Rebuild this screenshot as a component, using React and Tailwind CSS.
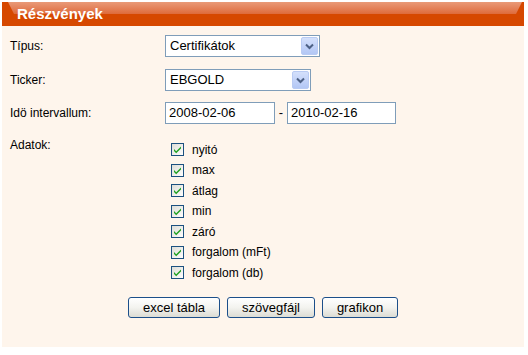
import React from 'react';

const rows = ['nyitó', 'max', 'átlag', 'min', 'záró', 'forgalom (mFt)', 'forgalom (db)'];

const Check = () => (
  <svg width="13" height="13" viewBox="0 0 13 13" className="shrink-0">
    <defs>
      <linearGradient id="cbg" x1="0" y1="0" x2="1" y2="1">
        <stop offset="0" stopColor="#dcdcd6" />
        <stop offset="1" stopColor="#ffffff" />
      </linearGradient>
    </defs>
    <rect x="0.5" y="0.5" width="12" height="12" fill="url(#cbg)" stroke="#1c5180" />
    <path d="M3 6 L5.2 8.3 L10 3.6 L10 5.6 L5.2 10.3 L3 8 Z" fill="#21a121" />
  </svg>
);

const Select = ({ value, width }) => (
  <div className={`flex items-center h-[22px] border border-[#7f9db9] bg-white ${width}`}>
    <span className="flex-1 pl-[4px] text-[13px] text-black">{value}</span>
    <span className="w-[17px] h-[18px] mr-[1px] flex items-center justify-center rounded-[2px] border border-[#b9cbf3] bg-gradient-to-b from-[#d4e0fb] to-[#b3c7f5]">
      <svg width="9" height="7" viewBox="0 0 9 7">
        <path d="M1 1.5 L4.5 5 L8 1.5" fill="none" stroke="#4d6185" strokeWidth="2" />
      </svg>
    </span>
  </div>
);

const Btn = ({ children, width }) => (
  <button className={`h-[21px] ${width} rounded-[3px] border border-[#1c4f8a] bg-gradient-to-b from-white via-[#f3f3ef] to-[#dcdcd4] text-[13px] font-normal text-black leading-none`}>
    {children}
  </button>
);

export default function App() {
  return (
    <div className="bg-white w-[528px] h-[355px] pt-[2px] pl-[2px] font-['Liberation_Sans',Arial,sans-serif]">
      <div className="w-[522px] h-[345px] bg-[#fef5ec] flex flex-col">
        <div className="relative h-[24px] bg-[#d64800] flex items-center">
          <div className="absolute left-[2px] right-[2px] top-0 h-[12px] bg-gradient-to-b from-[#e99a78] to-[#de6a3a] [clip-path:polygon(4px_0,100%_0,calc(100%-6px)_100%,10px_100%)]" />
          <span className="relative pl-[15px] text-[15px] font-bold text-white">Részvények</span>
        </div>

        <div className="flex flex-col pl-[8px] text-[12px] text-black">
          <div className="flex items-center mt-[9px]">
            <span className="w-[155px]">Típus:</span>
            <Select value="Certifikátok" width="w-[155px]" />
          </div>
          <div className="flex items-center mt-[12px]">
            <span className="w-[155px]">Ticker:</span>
            <Select value="EBGOLD" width="w-[146px]" />
          </div>
          <div className="flex items-center mt-[11px]">
            <span className="w-[155px]">Idö intervallum:</span>
            <div className="w-[110px] h-[22px] border border-[#7f9db9] bg-white pl-[3px] text-[13px] flex items-center">2008-02-06</div>
            <span className="w-[12px] text-center text-[13px]">-</span>
            <div className="w-[109px] h-[22px] border border-[#7f9db9] bg-white pl-[3px] text-[13px] flex items-center">2010-02-16</div>
          </div>
          <div className="flex mt-[12px]">
            <span className="w-[161px]">Adatok:</span>
            <div className="flex flex-col gap-[7.5px] pt-[7px]">
              {rows.map((r) => (
                <div key={r} className="flex items-center h-[13px]">
                  <Check />
                  <span className="ml-[8px]">{r}</span>
                </div>
              ))}
            </div>
          </div>
        </div>

        <div className="flex justify-center gap-[7px] mt-[18px]">
          <Btn width="w-[92px]">excel tábla</Btn>
          <Btn width="w-[88px]">szövegfájl</Btn>
          <Btn width="w-[76px]">grafikon</Btn>
        </div>
      </div>
    </div>
  );
}
